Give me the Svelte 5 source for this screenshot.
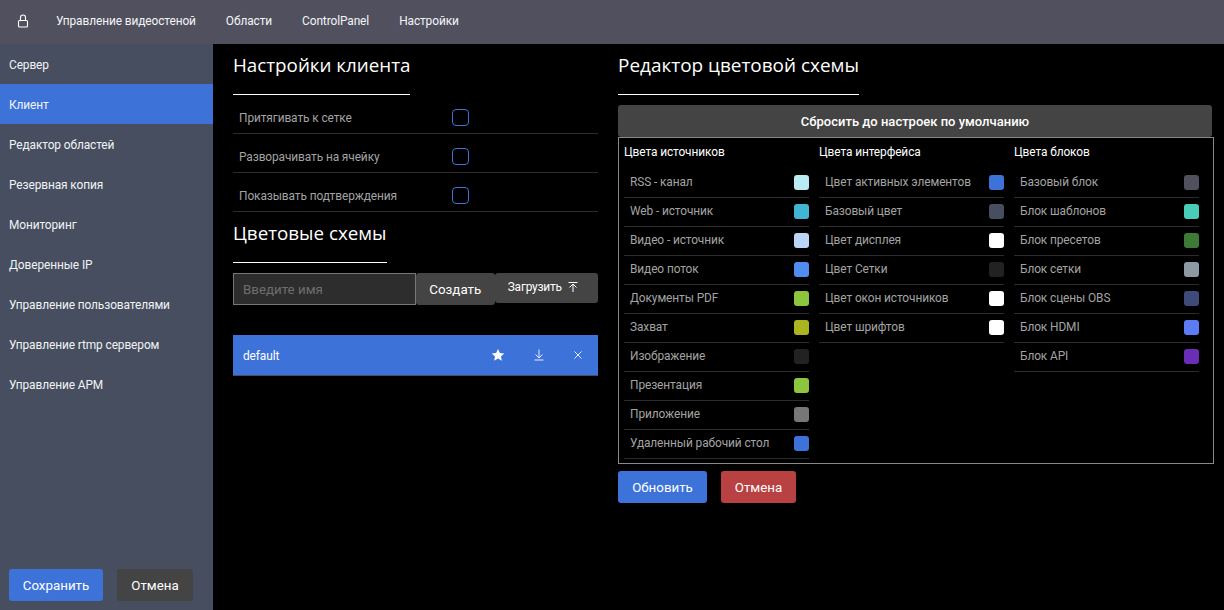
<script>
  const nav = ['Управление видеостеной', 'Области', 'ControlPanel', 'Настройки'];
  const side = ['Сервер', 'Клиент', 'Редактор областей', 'Резервная копия', 'Мониторинг', 'Доверенные IP', 'Управление пользователями', 'Управление rtmp сервером', 'Управление АРМ'];
  const checks = ['Притягивать к сетке', 'Разворачивать на ячейку', 'Показывать подтверждения'];
  const cols = [
    { title: 'Цвета источников', items: [['RSS - канал', '#b9ebf2'], ['Web - источник', '#43b5d4'], ['Видео - источник', '#bcd4f5'], ['Видео поток', '#4f8ef0'], ['Документы PDF', '#8cc63f'], ['Захват', '#aab51f'], ['Изображение', '#222222'], ['Презентация', '#8cc63f'], ['Приложение', '#777777'], ['Удаленный рабочий стол', '#3d72d9']] },
    { title: 'Цвета интерфейса', items: [['Цвет активных элементов', '#3d72d9'], ['Базовый цвет', '#464e5f'], ['Цвет дисплея', '#ffffff'], ['Цвет Сетки', '#222222'], ['Цвет окон источников', '#ffffff'], ['Цвет шрифтов', '#ffffff']] },
    { title: 'Цвета блоков', items: [['Базовый блок', '#50505f'], ['Блок шаблонов', '#4acdb8'], ['Блок пресетов', '#3c7a35'], ['Блок сетки', '#8d9aa3'], ['Блок сцены OBS', '#3d4a7a'], ['Блок HDMI', '#5c7cf5'], ['Блок API', '#6a2db5']] }
  ];
</script>

<div class="page">
  <header class="top">
    <svg class="lock" width="14" height="14" viewBox="0 0 14 14" fill="none" stroke="#fff" stroke-width="1.100"><rect x="2.500" y="6.500" width="9" height="6.500" rx="1"/><path d="M4.500 6.500V3.500a2.500 2.500 0 0 1 5 0v3"/></svg>
    {#each nav as n}<span class="nav">{n}</span>{/each}
  </header>
  <div class="body">
    <aside class="side">
      <div class="menu">
        {#each side as s, i}<div class="item" class:on={i === 1}>{s}</div>{/each}
      </div>
      <div class="sidebtns">
        <button class="btn blue save">Сохранить</button>
        <button class="btn dark cancel">Отмена</button>
      </div>
    </aside>
    <main class="main">
      <section class="left">
        <h2 class="h first">Настройки клиента</h2>
        <div class="checks">
          {#each checks as c}
            <div class="check"><span class="lbl">{c}</span><span class="box"></span></div>
          {/each}
        </div>
        <h2 class="h second">Цветовые схемы</h2>
        <div class="create">
          <input class="inp" placeholder="Введите имя" />
          <button class="btn dark mk">Создать</button>
          <button class="btn dark up">Загрузить
            <svg width="12" height="12" viewBox="0 0 12 12" fill="none" stroke="#fff" stroke-width="1"><path d="M1.500 1.500h9M6 11V3.200M2.500 6.500 6 3l3.500 3.500"/></svg>
          </button>
        </div>
        <div class="scheme">
          <span class="name">default</span>
          <span class="acts">
            <svg width="14" height="14" viewBox="0 0 24 24" fill="#fff"><path d="M12 1.500l3.200 6.900 7.500.9-5.600 5.100 1.500 7.400L12 18.100l-6.600 3.700 1.500-7.400L1.300 9.300l7.500-.9z"/></svg>
            <svg width="12" height="12" viewBox="0 0 12 12" fill="none" stroke="#e6ecfa" stroke-width="1"><path d="M1.500 11h9M6 .5v8M2.500 5.500 6 9l3.500-3.500"/></svg>
            <svg width="10" height="10" viewBox="0 0 10 10" fill="none" stroke="#e6ecfa" stroke-width="1"><path d="M1.500 1.500l7 7M8.500 1.500l-7 7"/></svg>
          </span>
        </div>
      </section>
      <section class="right">
        <h2 class="h first wide">Редактор цветовой схемы</h2>
        <button class="reset">Сбросить до настроек по умолчанию</button>
        <div class="grid">
          {#each cols as col}
            <div class="col">
              <div class="ct">{col.title}</div>
              {#each col.items as it}
                <div class="row"><span>{it[0]}</span><i class="sw" style="background:{it[1]}"></i></div>
              {/each}
            </div>
          {/each}
        </div>
        <div class="acts2">
          <button class="btn blue upd">Обновить</button>
          <button class="btn red esc">Отмена</button>
        </div>
      </section>
    </main>
  </div>
</div>

<style>
  :global(body) { margin: 0; background: #000; }
  .page { width: 1224px; height: 610px; display: flex; flex-direction: column; overflow: hidden; font-family: Roboto, "Liberation Sans", sans-serif; font-size: 11.9px; letter-spacing: -0.1px; color: #fff; }
  .top { height: 44px; background: #50505f; display: flex; align-items: center; padding-left: 16px; box-sizing: border-box; flex: none; padding-bottom: 3px; }
  .lock { margin-right: 26px; }
  .nav { margin-right: 30px; color: #f4f4f6; white-space: nowrap; }
  .body { flex: 1; display: flex; min-height: 0; }
  .side { width: 213px; background: #464e5f; display: flex; flex-direction: column; justify-content: space-between; flex: none; }
  .item { height: 40px; line-height: 42px; padding-left: 9px; color: #f2f3f5; white-space: nowrap; }
  .item.on { background: #3d72d9; }
  .sidebtns { display: flex; gap: 14px; padding: 0 0 9px 9px; }
  .btn { border: 0; border-radius: 3px; color: #fff; font-family: Roboto, sans-serif; font-size: 13.33px; letter-spacing: 0; height: 32px; padding: 0; }
  .blue { background: #3d72d9; }
  .dark { background: #444444; }
  .red { background: #b94141; }
  .save { width: 94px; }
  .cancel { width: 76px; }
  .main { flex: 1; background: #000; display: flex; min-width: 0; }
  .left { width: 365px; margin-left: 20px; flex: none; }
  .right { width: 596px; margin-left: 20px; flex: none; }
  .h { display: table; margin: 0; font-family: "Open Sans", sans-serif; font-weight: 400; font-size: 18.8px; letter-spacing: 0; line-height: 26px; color: #fff; border-bottom: 1px solid #fff; white-space: nowrap; }
  .wide { font-size: 18.95px; }
  .first { padding: 8px 0 16px; }
  .second { padding: 8px 0 16px; }
  .checks { height: 117px; }
  .check { border-bottom: 1px solid #2c2c2c; display: flex; align-items: center; padding: 6px 0 0 6px; height: 32px; color: #a3a3a3; }
  .lbl { width: 213px; padding-top: 2px; }
  .box { width: 15px; height: 15px; border: 1px solid #3d72d9; border-radius: 4px; display: block; }
  .create { display: flex; margin-top: 10px; align-items: flex-start; }
  .inp { width: 183px; height: 32px; box-sizing: border-box; background: #2d2d2d; border: 1px solid #777; outline: 0; color: #fff; padding: 0 9px; font-family: Roboto, sans-serif; font-size: 13.33px; }
  .inp::placeholder { color: #6e6e6e; opacity: 1; }
  .mk { width: 79px; }
  .up { width: 104px; height: 30px; font-size: 11.9px; letter-spacing: -0.2px; display: flex; align-items: center; justify-content: center; gap: 5px; padding: 0 6px 2px 0; }
  .scheme { margin-top: 30px; height: 40px; width: 365px; background: #3d72d9; border-bottom: 1px solid #464e5f; display: flex; align-items: center; justify-content: space-between; }
  .name { padding: 2px 0 0 10px; }
  .acts { display: flex; align-items: center; gap: 28px; padding-right: 15px; }
  .reset { display: block; width: 594px; height: 32px; margin-top: 10px; background: #444; border: 0; border-radius: 3px; color: #fff; font-family: Roboto, sans-serif; font-weight: 500; font-size: 13px; padding: 0; }
  .grid { width: 596px; height: 327px; box-sizing: border-box; border: 1px solid #888; display: flex; gap: 10px; padding: 0 0 0 5px; }
  .col { width: 185px; }
  .ct { height: 31px; line-height: 28px; color: #fff; white-space: nowrap; }
  .row { height: 26px; padding-bottom: 2px; border-bottom: 1px solid #2c2c2c; display: flex; align-items: center; justify-content: space-between; padding-left: 6px; color: #a3a3a3; white-space: nowrap; }
  .sw { display: block; width: 15px; height: 15px; border-radius: 3px; }
  .acts2 { display: flex; gap: 14px; margin-top: 7px; }
  .upd { width: 89px; }
  .esc { width: 75px; }
</style>
